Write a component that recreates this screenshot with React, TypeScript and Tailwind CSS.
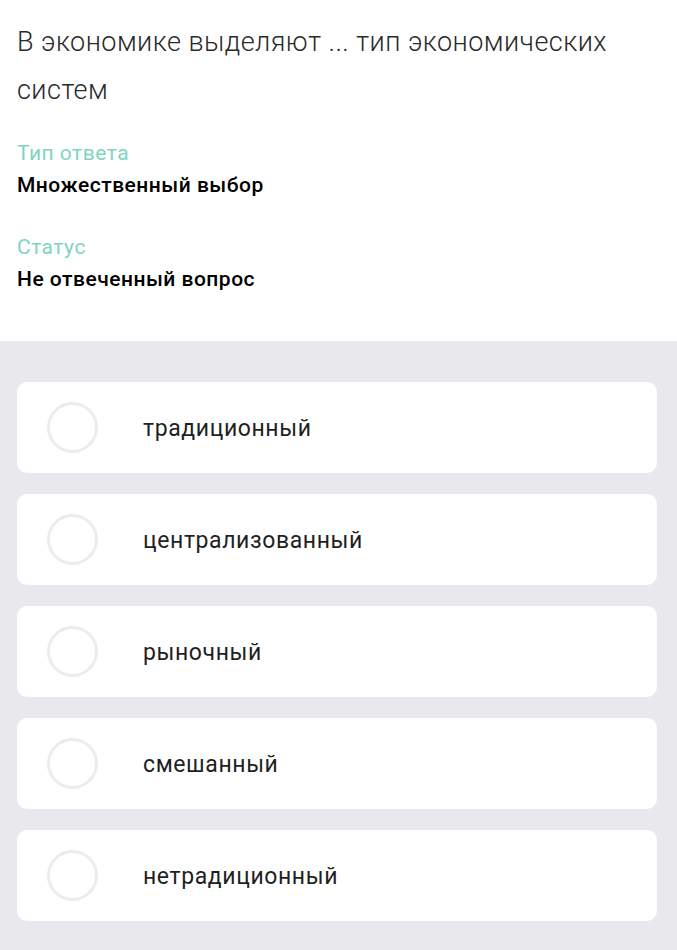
import React from 'react';

const OPTIONS = ['традиционный', 'централизованный', 'рыночный', 'смешанный', 'нетрадиционный'];

function OptionCard({ label }: { label: string }) {
  return (
    <div className="flex h-[91px] items-center rounded-[10px] bg-white pl-[30px]">
      <div className="h-[51px] w-[51px] shrink-0 rounded-full border-[3px] border-[#ececec]" />
      <span className="ml-[45px] mt-[4px] text-[23px] tracking-[0.6px] text-[#1f1f1f]">{label}</span>
    </div>
  );
}

export default function App() {
  return (
    <div className="min-h-[950px] bg-[#e9e8ed]" style={{ fontFamily: 'Roboto, "Noto Sans", sans-serif' }}>
      {/* Question header */}
      <div className="bg-white px-[17px] pt-[18px] pb-[46px]">
        <h1 className="text-[27px] font-light leading-[48px] tracking-[0.45px] text-[#2a2a2a]">
          В экономике выделяют ... тип экономических систем
        </h1>

        <div className="mt-[23px] text-[21px] leading-[32px] tracking-[0.5px]">
          <p className="text-[#80d4c0]">Тип ответа</p>
          <p className="font-medium text-black">Множественный выбор</p>
        </div>

        <div className="mt-[30px] text-[21px] leading-[32px] tracking-[0.5px]">
          <p className="text-[#80d4c0]">Статус</p>
          <p className="font-medium text-black">Не отвеченный вопрос</p>
        </div>
      </div>

      {/* Answer options */}
      <div className="flex flex-col gap-[21px] pl-[17px] pr-[20px] pt-[41px] pb-[29px]">
        {OPTIONS.map((o) => (
          <OptionCard key={o} label={o} />
        ))}
      </div>
    </div>
  );
}
